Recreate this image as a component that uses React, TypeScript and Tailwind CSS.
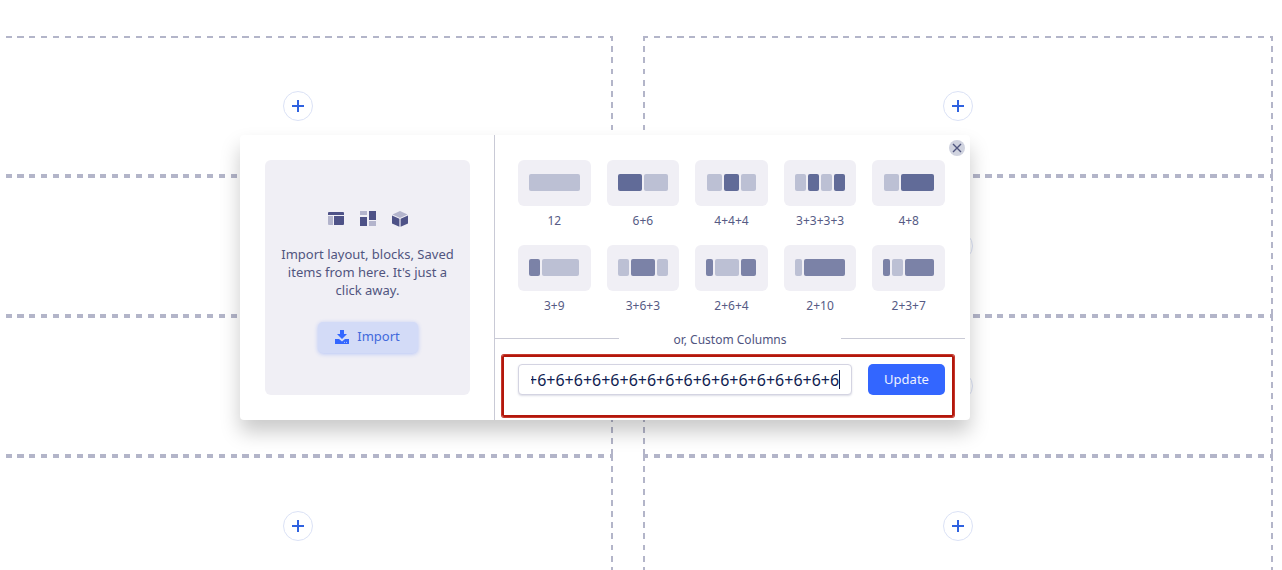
import React, { useEffect, useRef, useState } from 'react';

type Preset = {
  label: string;
  bars: string[];
};

const LIGHT = 'bg-[#bcc0d4]';
const MID = 'bg-[#7b82a7]';
const DARK = 'bg-[#616b98]';

const presets: Preset[] = [
  { label: '12', bars: [`w-[51px] ${LIGHT}`] },
  { label: '6+6', bars: [`w-[24px] ${DARK}`, `w-[24px] ${LIGHT}`] },
  { label: '4+4+4', bars: [`w-[15px] ${LIGHT}`, `w-[15px] ${DARK}`, `w-[15px] ${LIGHT}`] },
  {
    label: '3+3+3+3',
    bars: [`w-[11px] ${LIGHT}`, `w-[11px] ${DARK}`, `w-[11px] ${LIGHT}`, `w-[11px] ${DARK}`],
  },
  { label: '4+8', bars: [`w-[15px] ${LIGHT}`, `w-[33px] ${DARK}`] },
  { label: '3+9', bars: [`w-[11px] ${MID}`, `w-[37px] ${LIGHT}`] },
  { label: '3+6+3', bars: [`w-[11px] ${LIGHT}`, `w-[24px] ${MID}`, `w-[11px] ${LIGHT}`] },
  { label: '2+6+4', bars: [`w-[7px] ${MID}`, `w-[24px] ${LIGHT}`, `w-[15px] ${MID}`] },
  { label: '2+10', bars: [`w-[7px] ${LIGHT}`, `w-[41px] ${MID}`] },
  { label: '2+3+7', bars: [`w-[7px] ${MID}`, `w-[11px] ${LIGHT}`, `w-[29px] ${MID}`] },
];

const rows = [1, 2, 3, 4];

// wider dash spacing than border-dashed gives
const dashed =
  '[--x:repeating-linear-gradient(90deg,#b3b5c9_0_0.8%,transparent_0.8%_1.7%,#b3b5c9_1.7%_1.88%)] [--y:repeating-linear-gradient(180deg,#b3b5c9_0_3.5%,transparent_3.5%_7.3%,#b3b5c9_7.3%_8%)] [background:var(--x)_top/100%_2px_no-repeat,var(--x)_bottom/100%_2px_no-repeat,var(--y)_left/2px_100%_no-repeat,var(--y)_right/2px_100%_no-repeat]';

const Column: React.FC = () => (
  <div className="flex-1">
    {rows.map((row) => (
      <div key={row} className={`flex h-[140px] items-center justify-center ${dashed}`}>
        <button
          aria-label="Add block"
          className="flex size-[30px] items-center justify-center rounded-full border border-[#dbe2f6] bg-white"
        >
          <svg width="12" height="12" viewBox="0 0 12 12" stroke="#2f62e0" strokeWidth="2">
            <path d="M6 0v12M0 6h12" />
          </svg>
        </button>
      </div>
    ))}
  </div>
);

const ImportPanel: React.FC = () => (
  <div className="w-[255px] shrink-0 border-r border-[#c9cad6] py-[25px] pr-6 pl-[25px]">
    <div className="flex h-full flex-col items-center justify-center rounded-md bg-[#f0eff5] px-3 pt-2">
      <div className="flex gap-4">
        <svg width="16" height="16" viewBox="0 0 16 16" fill="#4e5287">
          <path d="M1 1h14a1 1 0 0 1 1 1v2H0V2a1 1 0 0 1 1-1zM6 5h10v8a1 1 0 0 1-1 1H6z" />
          <path d="M0 5h5v9H1a1 1 0 0 1-1-1z" fill="#b3b4cc" />
        </svg>
        <svg width="16" height="16" viewBox="0 0 16 16" fill="#4e5287">
          <path d="M0 6h7v9H0zM9 0h7v9H9z" />
          <path d="M0 0h7v4H0zM9 10h7v5H9z" fill="#b3b4cc" />
        </svg>
        <svg width="16" height="16" viewBox="0 0 16 16" fill="#4e5287">
          <path d="M0 4.5l7.4 3.3v8L0 12.4zM16 4.5L8.6 7.8v8l7.4-3.4z" />
          <path d="M8 0l7.5 3.4L8 7 .5 3.4z" fill="#b3b4cc" />
        </svg>
      </div>
      <p className="mt-[18px] text-center text-[13px] leading-[18px] text-[#50557f]">
        Import layout, blocks, Saved items from here. It's just a click away.
      </p>
      <button className="mt-[23px] flex h-[31px] w-[100px] items-center justify-center gap-2 rounded-[5px] bg-[#d3dbf7] text-[13px] text-[#4169dc] shadow-[0_1px_4px_rgba(51,102,255,0.3)]">
        <svg width="14" height="14" viewBox="0 0 14 14" fill="#3366ff">
          <path d="M5 0h4v4h3L7 9 2 4h3z" />
          <path d="M0 9h4l3 2.4L10 9h4v5H0z" />
          <path d="M9 12.4h1M11 12.4h1" stroke="#d3dbf7" strokeWidth="0.8" />
        </svg>
        Import
      </button>
    </div>
  </div>
);

const CustomColumns: React.FC = () => {
  const [value, setValue] = useState(Array(24).fill('6').join('+'));
  const input = useRef<HTMLInputElement>(null);

  // keep the end of a long list in view
  useEffect(() => {
    if (input.current) {
      input.current.scrollLeft = input.current.scrollWidth;
    }
  }, [value]);

  return (
    <form className="relative mt-[18px] flex gap-4 pr-[25px] pl-[23px]" onSubmit={(e) => e.preventDefault()}>
      <div className="relative flex-1">
        <input
          ref={input}
          aria-label="Custom columns"
          value={value}
          onChange={(e) => setValue(e.target.value)}
          className="h-[31px] w-full rounded-[4px] border border-[#d4d4e2] bg-white px-3 text-[16px] text-[#101d52] caret-transparent shadow-[0_1px_2px_rgba(80,84,130,0.2)] outline-none"
        />
        <span className="absolute top-1.5 right-3 h-[19px] w-px bg-[#101d52]" />
      </div>
      <button className="h-[31px] w-[77px] rounded-[5px] bg-[#3366ff] text-[13px] text-[#edf1ff]">Update</button>
      <div className="pointer-events-none absolute -top-[9px] right-4 -bottom-[22px] left-[7px] rounded-xs border-2 border-[#b3170b] ring-1 ring-[#c4392e]" />
    </form>
  );
};

const LayoutPicker: React.FC = () => (
  <section className="absolute top-[135px] left-[240px] flex h-[285px] w-[730px] rounded-[4px] bg-white shadow-[0_12px_20px_rgba(0,0,0,0.21)]">
    <ImportPanel />
    <div className="min-w-0 flex-1 pt-[25px]">
      <div className="grid grid-cols-5 gap-x-4 pr-[25px] pl-[23px]">
        {presets.map((preset) => (
          <button key={preset.label} className="flex h-[85px] flex-col">
            <span className="flex h-[46px] w-full items-center justify-center gap-0.5 rounded-md bg-[#f0eff5] pb-px">
              {preset.bars.map((bar, index) => (
                <span key={index} className={`h-[17px] rounded-[2px] ${bar}`} />
              ))}
            </span>
            <span className="mt-1.5 w-full text-center text-[12px] leading-[18px] text-[#565b85]">
              {preset.label}
            </span>
          </button>
        ))}
      </div>
      <div className="mr-[5px] flex h-4 items-center justify-between">
        <span className="h-px w-[124px] bg-[#c9cad6]" />
        <span className="mt-1 text-[12px] leading-[18px] text-[#50557f]">or, Custom Columns</span>
        <span className="h-px w-[124px] bg-[#c9cad6]" />
      </div>
      <CustomColumns />
    </div>
    <button
      aria-label="Close"
      className="absolute top-[5px] right-[5px] flex size-4 items-center justify-center rounded-full bg-[#d0d3df]"
    >
      <svg width="10" height="10" viewBox="0 0 10 10" stroke="#50557f" strokeWidth="1.4">
        <path d="M1 1l8 8M9 1L1 9" />
      </svg>
    </button>
  </section>
);

const App: React.FC = () => {
  return (
    <main className="relative h-screen overflow-hidden bg-white font-['Noto_Sans',sans-serif]">
      {/* Canvas columns */}
      <div className="mr-[9px] ml-[5px] overflow-hidden pt-9">
        <div className="-ml-[22px] flex gap-[30px]">
          <Column />
          <Column />
        </div>
      </div>

      <LayoutPicker />
    </main>
  );
};

export default App;
